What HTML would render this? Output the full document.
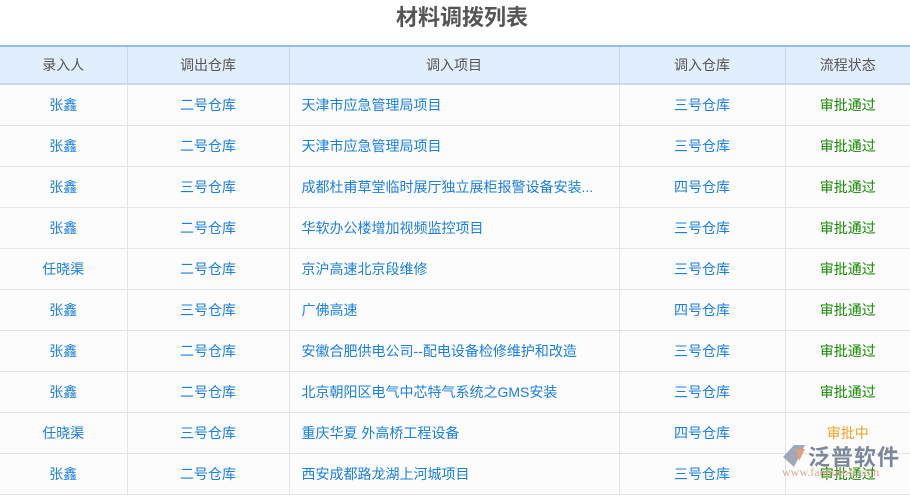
<!DOCTYPE html><html><head><meta charset="utf-8"><style>
body{margin:0;width:910px;height:488px;overflow:hidden;background:#fff;font-family:"Liberation Sans","Noto Sans CJK SC",sans-serif;position:relative}
h1{margin:0;position:absolute;top:3px;left:0;width:924px;text-align:center;font-size:22px;color:#555;font-weight:bold;line-height:30px}
table{position:absolute;top:45px;left:0;border-collapse:collapse;width:910px;table-layout:fixed;font-size:14px}
th{background:#e1eefb;color:#555;font-weight:normal;height:36px;padding:0;border-top:2px solid #8fbde6;border-bottom:2px solid #c8dcee;border-right:1px solid #c9d9e8}
td{height:40px;border-bottom:1px solid #e4e4e4;border-right:1px solid #e4e4e4;text-align:center;color:#1a7fe0;padding:0;background:#fcfcfd}
td.l{text-align:left;padding-left:12px}
td.g{color:#158a00}td.o{color:#f5a020}
th:last-child,td:last-child{border-right:none}
.wm{position:absolute;left:808px;top:440px;font-size:22px;color:#7d879b;font-weight:bold;letter-spacing:1px}
.wm2{position:absolute;left:782px;top:465px;font-size:12px;color:#e0a890;font-family:"Liberation Serif",serif}
</style></head><body>
<h1>材料调拨列表</h1>
<table><colgroup><col style="width:127px"><col style="width:162px"><col style="width:330px"><col style="width:166px"><col></colgroup>
<tr><th>录入人</th><th>调出仓库</th><th>调入项目</th><th>调入仓库</th><th>流程状态</th></tr>
<tr><td>张鑫</td><td>二号仓库</td><td class="l">天津市应急管理局项目</td><td>三号仓库</td><td class="g">审批通过</td></tr>
<tr><td>张鑫</td><td>二号仓库</td><td class="l">天津市应急管理局项目</td><td>三号仓库</td><td class="g">审批通过</td></tr>
<tr><td>张鑫</td><td>三号仓库</td><td class="l">成都杜甫草堂临时展厅独立展柜报警设备安装...</td><td>四号仓库</td><td class="g">审批通过</td></tr>
<tr><td>张鑫</td><td>二号仓库</td><td class="l">华软办公楼增加视频监控项目</td><td>三号仓库</td><td class="g">审批通过</td></tr>
<tr><td>任晓渠</td><td>二号仓库</td><td class="l">京沪高速北京段维修</td><td>三号仓库</td><td class="g">审批通过</td></tr>
<tr><td>张鑫</td><td>三号仓库</td><td class="l">广佛高速</td><td>四号仓库</td><td class="g">审批通过</td></tr>
<tr><td>张鑫</td><td>二号仓库</td><td class="l">安徽合肥供电公司--配电设备检修维护和改造</td><td>三号仓库</td><td class="g">审批通过</td></tr>
<tr><td>张鑫</td><td>二号仓库</td><td class="l">北京朝阳区电气中芯特气系统之GMS安装</td><td>三号仓库</td><td class="g">审批通过</td></tr>
<tr><td>任晓渠</td><td>三号仓库</td><td class="l">重庆华夏 外高桥工程设备</td><td>四号仓库</td><td class="o">审批中</td></tr>
<tr><td>张鑫</td><td>二号仓库</td><td class="l">西安成都路龙湖上河城项目</td><td>三号仓库</td><td class="g">审批通过</td></tr>
</table>
<svg style="position:absolute;left:781px;top:443px" width="26" height="26"><path d="M13 2 L24 2 L13 24 L2 14 Z" fill="#8a93a8" opacity=".8"/><path d="M15 6 L24 6 L18 18 Z" fill="#e0a080"/></svg>
<div class="wm">泛普软件</div>
<div class="wm2">www.fanpusoft.com</div>
</body></html>
